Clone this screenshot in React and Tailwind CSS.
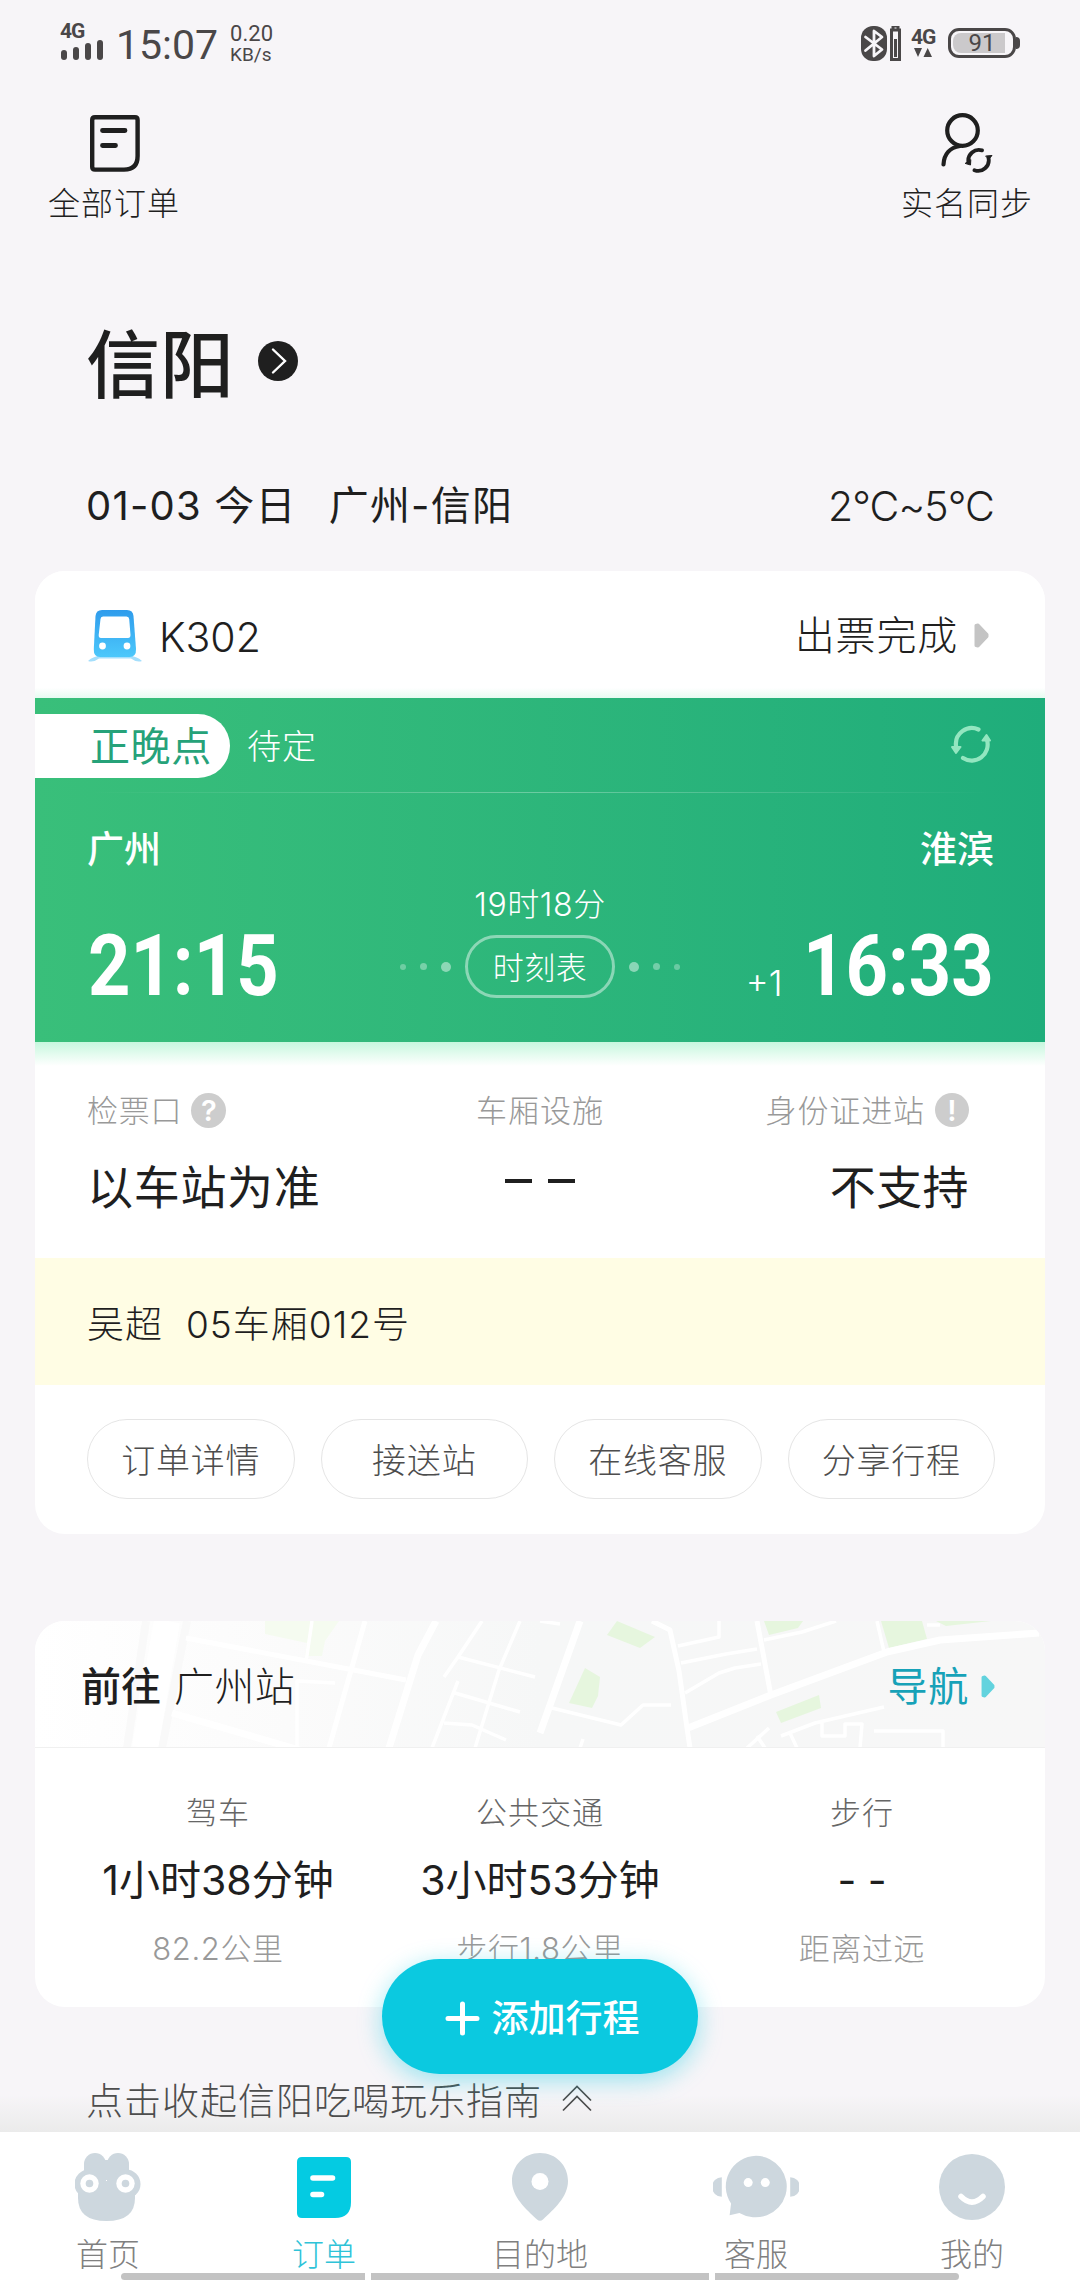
import React from 'react';

const quickActions = ['订单详情', '接送站', '在线客服', '分享行程'];

const routes = [
    { mode: '驾车', time: '1小时38分钟', note: '82.2公里' },
    { mode: '公共交通', time: '3小时53分钟', note: '步行1.8公里' },
    { mode: '步行', time: '- -', note: '距离过远' },
];

const OrdersIcon = () => (
    <svg width="50" height="57" viewBox="0 0 50 57" fill="none" stroke="#1f1f1f" strokeWidth="4.4" strokeLinecap="round">
        <path d="M5 2.2H45Q47.6 2.2 47.6 5V41Q47.6 54.6 34 54.6H5Q2.2 54.6 2.2 52V5Q2.2 2.2 5 2.2Z" />
        <path d="M12.5 15.5H35M12.5 30.5H25.5" strokeWidth="4.8" />
    </svg>
);

const UserSyncIcon = () => (
    <svg width="52" height="60" viewBox="0 0 52 60" fill="none" stroke="#1f1f1f" strokeWidth="4.2" strokeLinecap="round">
        <circle cx="21.5" cy="17.5" r="15.3" />
        <path d="M2.5 51.5C3 41 9 34.5 19 33" />
        <path d="M41 37.4A10.6 10.6 0 0 0 27.4 49M33.500 57.200A10.6 10.6 0 0 0 47.5 45" strokeWidth="3.8" />
        <path d="M24.500 50.500L29.500 52L29.800 47ZM45 43L51 42.500L48 46Z" fill="#1f1f1f" strokeWidth="1" />
    </svg>
);

const BluetoothIcon = () => (
    <svg width="26" height="35" viewBox="0 0 26 35">
        <rect width="26" height="35" rx="12" fill="#4a4748" />
        <path d="M4.500 11L21 23.500L13 30V5L21 11L4.500 24.500" fill="none" stroke="#f7f5f8" strokeWidth="2.8" strokeLinejoin="round" strokeLinecap="round" />
    </svg>
);

const TrainIcon = () => (
    <svg className="mt-1" width="54" height="53" viewBox="0 0 54 53">
        <defs>
            <linearGradient id="train" x1="0" y1="0" x2="0" y2="1">
                <stop offset="0" stopColor="#2f9cec" />
                <stop offset="1" stopColor="#4cc8fb" />
            </linearGradient>
        </defs>
        <path d="M0 51Q5 46 14 45.500H40Q49 46 54 51Q49 53 43 48.500H11Q5 53 0 51Z" fill="#a5dffc" />
        <path d="M14 0H39Q45 0 45.500 6L48 39Q48.300 47 41.500 47H12Q5.500 47 5.800 39L7.500 6Q8 0 14 0Z" fill="url(#train)" />
        <path d="M15 6.500H38.500Q41 6.500 41.200 9L42.500 25Q42.500 28 40 28H13Q10.500 28 10.700 25L12.500 9Q12.600 6.500 15 6.500Z" fill="#fff" />
        <circle cx="14.500" cy="36" r="3.400" fill="#fff" />
        <circle cx="39" cy="36" r="3.400" fill="#fff" />
    </svg>
);

const RefreshIcon = () => (
    <svg className="mb-1" width="42" height="38" viewBox="0 0 42 38" fill="none" stroke="#93e6c0" strokeWidth="4.200" strokeLinecap="round">
        <path d="M28.500 4.500A16 16 0 0 0 6 21M13 33A16 16 0 0 0 37 15" />
        <path d="M2 22L10.500 22L6 28ZM32.500 15.500L40 15.500L36.500 10Z" fill="#93e6c0" strokeWidth="2" strokeLinejoin="round" />
    </svg>
);

const Arrow = ({ color, width, height }) => (
    <svg width={width} height={height} viewBox="0 0 15 25">
        <path d="M2 2.500L4 2L13 11.500V13.500L4 23L2 22.500Z" fill={color} stroke={color} strokeWidth="3" strokeLinejoin="round" />
    </svg>
);

const MapBackground = () => (
    <svg className="absolute inset-0" width="1010" height="127" viewBox="0 0 1010 127">
        <defs>
            <linearGradient id="mapFade">
                <stop offset="0" stopColor="#ffffff" />
                <stop offset="0.25" stopColor="#fbfbfb" />
                <stop offset="0.5" stopColor="#f6f7f7" />
                <stop offset="1" stopColor="#f7f7f7" />
            </linearGradient>
        </defs>
        <rect width="1010" height="127" fill="url(#mapFade)" />
        <path d="M230 0H304L290 20L287 35H270L272 22L230 13Z" fill="#f5fbf0" />
        <g fill="#e6f6de">
            <path d="M582 0L620 16L605 27L572 14Z" />
            <path d="M550 47L565 56L563 75L557 87L534 82Z" />
            <path d="M729 0H768L763 7L734 14Z" />
            <path d="M846 0H887L892 18L854 27Z" />
            <path d="M901 0H956L911 5Z" />
            <path d="M741 91L784 74L786 87L746 102Z" />
        </g>
        <g fill="none" stroke="#f9f9f9" strokeWidth="8">
            <path d="M111 0L92 127M152 0L127 127" />
        </g>
        <g fill="none" stroke="#fff" strokeLinejoin="round">
            <path d="M132 0L110 127" strokeWidth="26" />
            <path d="M545 0L505 112M653 107L736 74L852 31L905 19L1004 12M137 92L268 130M401 0L383 34L354 127" strokeWidth="7" />
            <path d="M617 0L635 9L644 50L652 107L655 127M722 0L736 75M151 17L371 59M330 0L294 127" strokeWidth="5" />
            <path d="M643 25L684 16V0M646 42L691 33L722 28M650 72L684 52L700 47L726 43M729 19L767 11L801 0M842 0L849 31M517 87L586 104L608 84L636 84M746 115L780 102L849 86M839 110H908V127" strokeWidth="3.500" />
            <path d="M712 127L734 107M722 115L730 127M755 112L762 127M787 102V115H810V103H827L825 127M277 0L271 41M447 0L423 36L409 56M423 36L500 56M485 0L464 49L440 127M420 72L485 91M423 60L397 127M409 102L437 104L471 119M300 62L262 60L262 127M545 127L548 118M505 0L525 3M892 4H905" strokeWidth="3.500" />
        </g>
        <path d="M0 126.500H1010" stroke="#f0f0f0" />
    </svg>
);

const HomeIcon = () => (
    <svg width="66" height="68" viewBox="0 0 66 68" fill="#cdd7de">
        <rect x="9" y="0" width="22" height="40" rx="11" />
        <rect x="32" y="0" width="22" height="40" rx="11" />
        <rect x="18" y="7" width="26" height="20" />
        <circle cx="14" cy="31" r="14.500" />
        <circle cx="51" cy="31" r="14.500" />
        <path d="M3 28H60V45Q60 68 31.500 68Q3 68 3 45Z" />
        <circle cx="14.500" cy="30.500" r="9.200" fill="#fff" />
        <circle cx="50.500" cy="30.500" r="9.200" fill="#fff" />
        <circle cx="14.500" cy="30.500" r="3.800" />
        <circle cx="50.500" cy="30.500" r="3.800" />
    </svg>
);

const OrderTabIcon = () => (
    <svg width="54" height="61" viewBox="0 0 54 61">
        <path d="M5 0H49Q54 0 54 5V45Q54 61 38 61H5Q0 61 0 56V5Q0 0 5 0Z" fill="#04cbe2" />
        <path d="M16 21H35.500M16 37.500H24.500" stroke="#fff" strokeWidth="5.600" strokeLinecap="round" />
    </svg>
);

const PinIcon = () => (
    <svg width="58" height="68" viewBox="0 0 58 68">
        <path d="M29 0C45 0 57 12.500 57 28C57 44 43 56 32 66.500Q29 69 26 66.500C15 56 1 44 1 28C1 12.500 13 0 29 0Z" fill="#cdd7de" />
        <circle cx="29" cy="28.500" r="8.500" fill="#fff" />
    </svg>
);

const ServiceIcon = () => (
    <svg width="86" height="64" viewBox="0 0 88 64" fill="#cdd7de">
        <path d="M9 22V42A10 10 0 0 1 9 22ZM79 22V42A10 10 0 0 0 79 22Z" />
        <path d="M44 0A32 31.500 0 1 1 27 58.500L17 61L18.500 49A32 31.500 0 0 1 44 0Z" />
        <circle cx="36" cy="27.500" r="4.600" fill="#fff" />
        <circle cx="53.500" cy="27.500" r="4.600" fill="#fff" />
    </svg>
);

const MineIcon = () => (
    <svg width="66" height="66" viewBox="0 0 66 66">
        <circle cx="33" cy="33" r="33" fill="#cdd7de" />
        <path d="M22 42.500Q33 53.500 44 42.500" fill="none" stroke="#fff" strokeWidth="5.500" strokeLinecap="round" />
    </svg>
);

const tabs = [
    { label: '首页', Icon: HomeIcon },
    { label: '订单', Icon: OrderTabIcon, active: true },
    { label: '目的地', Icon: PinIcon },
    { label: '客服', Icon: ServiceIcon },
    { label: '我的', Icon: MineIcon },
];

const StatusBar = () => (
    <div className="flex h-[84px] items-center justify-between pl-[60px] pr-[60px] pt-0.5 font-[Roboto] text-[#4a4748]">
        <div className="flex items-center">
            <div className="mb-1 w-[44px]">
                <div className="text-[21px] font-bold leading-[18px] tracking-[-1px]">4G</div>
                <div className="flex items-end gap-[6px] pl-px">
                    <span className="h-[10px] w-[6px] rounded-sm bg-[#4a4748]" />
                    <span className="h-[13px] w-[6px] rounded-sm bg-[#4a4748]" />
                    <span className="h-[17px] w-[6px] rounded-sm bg-[#4a4748]" />
                    <span className="h-5 w-[6px] rounded-sm bg-[#4a4748]" />
                </div>
            </div>
            <div className="ml-3 mt-1 text-[41px] leading-none">15:07</div>
            <div className="ml-3">
                <div className="text-[22px] leading-[22px]">0.20</div>
                <div className="text-[19px] leading-[19px]">KB/s</div>
            </div>
        </div>
        <div className="flex items-center">
            <BluetoothIcon />
            <svg className="ml-[3px]" width="11" height="35" viewBox="0 0 11 35">
                <path d="M3 3V0H8V3M1.500 4H9.500V33.500H1.500Z" fill="none" stroke="#4a4748" strokeWidth="3" />
                <rect x="4" y="13" width="3" height="18" fill="#4a4748" />
            </svg>
            <div className="ml-[10px] w-[25px]">
                <div className="text-[21px] font-bold leading-[18px] tracking-[-1px]">4G</div>
                <svg className="ml-[3px] mt-0.5" width="18" height="10" viewBox="0 0 18 10" fill="#4a4748">
                    <path d="M0 0H8L4 9ZM9.500 9H18L13.700 0Z" />
                </svg>
            </div>
            <div className="ml-[12px] flex h-[30px] w-[68px] rounded-[11px] border-3 border-[#4a4748] p-0.5">
                <div className="flex h-full w-[52px] items-center justify-center rounded-l-lg bg-[#cbc9cb] pl-1.5 text-[24px] leading-none">91</div>
            </div>
            <div className="h-3 w-1 rounded-r bg-[#4a4748]" />
        </div>
    </div>
);

const TripCard = () => (
    <section className="mx-[35px] overflow-hidden rounded-[30px] bg-white">
        <div className="flex h-[127px] items-center justify-between bg-linear-to-b from-white from-92% to-[#e6fbf1] pl-[53px] pr-[56px]">
            <div className="flex items-center">
                <TrainIcon />
                <span className="ml-[17px] mt-1.5 text-[41px] font-light">K302</span>
            </div>
            <div className="flex items-center gap-[16px] pt-0.5">
                <span className="text-[40px] font-light tracking-[0.8px]">出票完成</span>
                <Arrow color="#c4c4c4" width={15} height={25} />
            </div>
        </div>

        <div className="h-[344px] bg-linear-to-r from-[#39bf7a] to-[#1fad7b] pt-4 text-white">
            <div className="flex h-16 items-center justify-between pr-[53px]">
                <div className="flex items-center">
                    <div className="flex h-16 w-[195px] items-center rounded-r-full bg-white pl-[55px] pt-0.5 text-[40px] tracking-[0.6px] text-[#26a279]">正晚点</div>
                    <span className="ml-[17px] pt-0.5 text-[34px] font-light tracking-[1px]">待定</span>
                </div>
                <RefreshIcon />
            </div>
            <div className="mx-[53px] mt-3.5 h-px bg-linear-to-r from-transparent via-white/30 to-transparent" />
            <div className="flex items-start justify-between pl-[52px] pr-[51px] pt-[38px]">
                <div className="w-[260px]">
                    <div className="text-[37px] font-medium">广州</div>
                    <div className="ml-px mt-[55px] w-max origin-left scale-x-[0.86] font-[Roboto] text-[86px] font-bold">21:15</div>
                </div>
                <div className="mt-[58px] flex flex-col items-center">
                    <div className="text-[32px] font-light tracking-[0.6px]">19时18分</div>
                    <div className="mt-3.5 flex items-center">
                        <span className="size-1.5 rounded-full bg-white/30" />
                        <span className="ml-[14px] size-[7px] rounded-full bg-white/35" />
                        <span className="ml-[14px] size-[10px] rounded-full bg-white/45" />
                        <span className="ml-[14px] flex h-[63px] w-[150px] items-center justify-center rounded-full border-3 border-white/45 pt-0.5 text-[31px] font-light tracking-[0.5px]">时刻表</span>
                        <span className="ml-[14px] size-[10px] rounded-full bg-white/45" />
                        <span className="ml-[14px] size-[7px] rounded-full bg-white/35" />
                        <span className="ml-[14px] size-1.5 rounded-full bg-white/30" />
                    </div>
                </div>
                <div className="flex w-[261px] flex-col items-end">
                    <div className="text-[37px] font-medium">淮滨</div>
                    <div className="mt-[55px] flex items-end">
                        <span className="mb-2 mr-[-10px] text-[35px] font-light">+1</span>
                        <span className="w-max origin-right scale-x-[0.86] font-[Roboto] text-[86px] font-bold">16:33</span>
                    </div>
                </div>
            </div>
        </div>
        <div className="h-6 bg-linear-to-b from-[#c6f7de] to-white" />

        <div className="grid h-[192px] grid-cols-3 pl-[52px] pr-[76px] pt-[26px]">
            <div>
                <div className="flex h-9 items-center text-[31px] font-light tracking-[0.8px] text-[#999]">
                    检票口
                    <span className="ml-[9px] flex size-[35px] items-center justify-center rounded-full bg-[#cdcdcd] text-[29px] font-semibold tracking-normal text-white">?</span>
                </div>
                <div className="mt-[36px] whitespace-nowrap text-[46px] tracking-[0.7px]">以车站为准</div>
            </div>
            <div className="text-center">
                <div className="flex h-9 items-center justify-center pl-6 text-[31px] font-light tracking-[1px] text-[#999]">车厢设施</div>
                <div className="mt-[51px] flex justify-center gap-4 pl-6">
                    <span className="h-1 w-[27px] bg-[#1f1f1f]" />
                    <span className="h-1 w-[27px] bg-[#1f1f1f]" />
                </div>
            </div>
            <div className="text-right">
                <div className="flex h-9 items-center justify-end whitespace-nowrap text-[31px] font-light tracking-[0.9px] text-[#999]">
                    身份证进站
                    <span className="ml-2.5 flex size-[34px] items-center justify-center rounded-full bg-[#cdcdcd] text-[29px] font-semibold tracking-normal text-white">!</span>
                </div>
                <div className="mt-[36px] text-[46px] tracking-[0.4px]">不支持</div>
            </div>
        </div>

        <div className="flex h-[127px] items-center gap-[23px] bg-[#fffde4] pl-[52px] pt-1.5 text-[37px] font-light tracking-[1px]">
            <span>吴超</span>
            <span>05车厢012号</span>
        </div>

        <div className="grid grid-cols-4 gap-[26px] pb-[35px] pl-[52px] pr-[50px] pt-[34px]">
            {quickActions.map((label) => (
                <button key={label} className="h-20 rounded-full border border-[#e5e5e5] pt-1 text-[34px] font-light leading-none tracking-[0.8px] text-[#4d4d4d]">
                    {label}
                </button>
            ))}
        </div>
    </section>
);

const NavigationCard = () => (
    <section className="mx-[35px] mt-[87px] h-[386px] overflow-hidden rounded-[30px] bg-white">
        <div className="relative h-[128px]">
            <MapBackground />
            <div className="relative flex h-full items-center justify-between pl-[46px] pr-[50px] text-[40px]">
                <div className="flex gap-[13px] pt-[3px]">
                    <span className="font-medium">前往</span>
                    <span className="font-light tracking-[0.4px]">广州站</span>
                </div>
                <div className="flex items-center gap-3 pt-[3px] tracking-[0.8px] text-[#17a2b8]">
                    导航
                    <Arrow color="#62d3de" width={14} height={23} />
                </div>
            </div>
        </div>
        <div className="grid grid-cols-3 px-[22px] pt-[48px] text-center">
            {routes.map((route) => (
                <div key={route.mode}>
                    <div className="text-[31px] font-light tracking-[1px] text-[#666]">{route.mode}</div>
                    <div className="mt-[32px] text-[41px]">{route.time}</div>
                    <div className="mt-[32px] text-[31px] font-light tracking-[0.6px] text-[#999]">{route.note}</div>
                </div>
            ))}
        </div>
    </section>
);

const TabBar = () => (
    <nav className="relative grid h-[148px] grid-cols-5 bg-white">
        {tabs.map(({ label, Icon, active }) => (
            <div key={label} className="flex flex-col items-center">
                <div className="mt-[21px] flex h-[68px] items-center justify-center">
                    <Icon />
                </div>
                <span className={active ? 'mt-[18px] text-[32px] font-light text-[#2fc3d8]' : 'mt-[18px] text-[32px] font-light text-[#808080]'}>
                    {label}
                </span>
            </div>
        ))}
        <div className="absolute bottom-0 left-[121px] flex gap-1.5">
            <span className="h-[7px] w-[244px] rounded-l-full bg-[#c3c3c3]" />
            <span className="h-[7px] w-[338px] bg-[#c3c3c3]" />
            <span className="h-[7px] w-[244px] rounded-r-full bg-[#c3c3c3]" />
        </div>
    </nav>
);

const App = () => {
    return (
        <div className="relative h-[2280px] w-[1080px] overflow-hidden bg-[#f7f5f8] font-[Inter,'Noto_Sans_CJK_SC',sans-serif] leading-none text-[#1f1f1f]">
            <StatusBar />

            <header className="flex h-[187px] items-start justify-between pl-[48px] pr-[47px] pt-[30px] text-[32px] font-light tracking-[1px]">
                <div className="flex flex-col items-center">
                    <div className="flex h-[58px] items-center pl-0.5"><OrdersIcon /></div>
                    <span className="mt-4">全部订单</span>
                </div>
                <div className="flex flex-col items-center">
                    <div className="flex h-[58px] items-center"><UserSyncIcon /></div>
                    <span className="mt-4">实名同步</span>
                </div>
            </header>

            <div className="flex h-[188px] items-center pl-[86px]">
                <h1 className="text-[74px] font-medium">信阳</h1>
                <svg className="mb-2 ml-6" width="40" height="40" viewBox="0 0 40 40">
                    <circle cx="20" cy="20" r="20" fill="#1f1f1f" />
                    <path d="M15 8.500L27 20L15 31.500" fill="none" stroke="#fff" strokeWidth="2.400" strokeLinecap="round" />
                </svg>
            </div>

            <div className="flex h-[112px] items-center justify-between pb-[18px] pl-[86px] pr-[86px] text-[40px]">
                <div className="flex tracking-[1.2px]">
                    <span>01-03 今日</span>
                    <span className="ml-[32px]">广州-信阳</span>
                </div>
                <span className="text-[41px] font-light tracking-[-0.9px]">2°C~5°C</span>
            </div>

            <TripCard />
            <NavigationCard />

            <div className="flex h-[125px] items-end bg-linear-to-b from-transparent from-70% to-[#ebebeb] pb-[12px] pl-[86px] text-[37px] font-light tracking-[1px] text-[#4d4d4d]">
                点击收起信阳吃喝玩乐指南
                <svg className="mb-2 ml-5" width="30" height="27" viewBox="0 0 30 27" fill="none" stroke="#4d4d4d" strokeWidth="1.700">
                    <path d="M1 15.500L15 1.500L29 15.500M1 25.500L15 11.500L29 25.500" />
                </svg>
            </div>

            <TabBar />

            <button className="absolute left-[382px] top-[1959px] flex h-[115px] w-[316px] items-center justify-center gap-[12px] rounded-full bg-[#0bc9e0] pl-1 pt-[3px] text-[37px] font-medium leading-none text-white shadow-[0_6px_24px_rgba(11,201,224,0.4)]">
                <svg width="35" height="35" viewBox="0 0 35 35" stroke="#fff" strokeWidth="5" strokeLinecap="round">
                    <path d="M17.500 3V32M3 17.500H32" />
                </svg>
                添加行程
            </button>
        </div>
    );
};

export default App;
